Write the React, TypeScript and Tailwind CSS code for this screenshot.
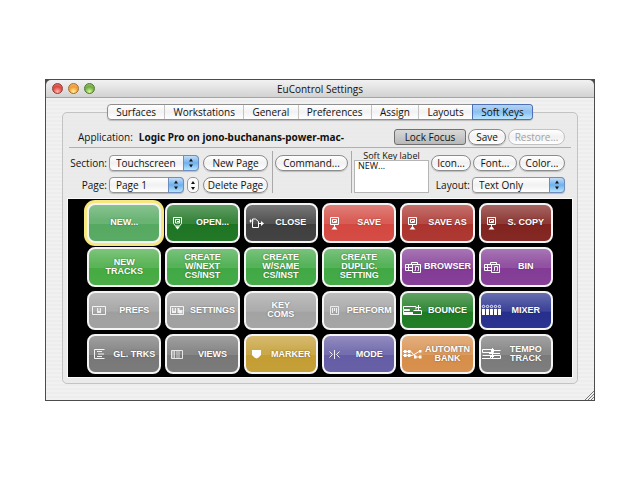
import React from 'react';
import clsx from 'clsx';

type IconName =
  | 'open' | 'close' | 'save' | 'browser' | 'prefs' | 'settings' | 'perform' | 'bounce'
  | 'mixer' | 'tracks' | 'views' | 'marker' | 'mode' | 'automation' | 'tempo';

interface SoftKey {
  label: string[];
  color: string;
  icon?: IconName;
  selected?: boolean;
}

const softKeys: SoftKey[] = [
  { label: ['NEW...'], color: 'bg-[#50a65c]', selected: true },
  { label: ['OPEN...'], color: 'bg-[#16701b]', icon: 'open' },
  { label: ['CLOSE'], color: 'bg-[#383838]', icon: 'close' },
  { label: ['SAVE'], color: 'bg-[#d2423a]', icon: 'save' },
  { label: ['SAVE AS'], color: 'bg-[#a92d27]', icon: 'save' },
  { label: ['S. COPY'], color: 'bg-[#7d1c18]', icon: 'save' },
  { label: ['NEW', 'TRACKS'], color: 'bg-[#40a83c]' },
  { label: ['CREATE', 'W/NEXT', 'CS/INST'], color: 'bg-[#3aa63e]' },
  { label: ['CREATE', 'W/SAME', 'CS/INST'], color: 'bg-[#3aa63e]' },
  { label: ['CREATE', 'DUPLIC.', 'SETTING'], color: 'bg-[#3aa63e]' },
  { label: ['BROWSER'], color: 'bg-[#7f3592]', icon: 'browser' },
  { label: ['BIN'], color: 'bg-[#7f3592]', icon: 'browser' },
  { label: ['PREFS'], color: 'bg-[#9c9c9c]', icon: 'prefs' },
  { label: ['SETTINGS'], color: 'bg-[#9c9c9c]', icon: 'settings' },
  { label: ['KEY', 'COMS'], color: 'bg-[#a0a0a0]' },
  { label: ['PERFORM'], color: 'bg-[#a0a0a0]', icon: 'perform' },
  { label: ['BOUNCE'], color: 'bg-[#16771b]', icon: 'bounce' },
  { label: ['MIXER'], color: 'bg-[#1f2889]', icon: 'mixer' },
  { label: ['GL. TRKS'], color: 'bg-[#737373]', icon: 'tracks' },
  { label: ['VIEWS'], color: 'bg-[#737373]', icon: 'views' },
  { label: ['MARKER'], color: 'bg-[#c29a2c]', icon: 'marker' },
  { label: ['MODE'], color: 'bg-[#5f57a2]', icon: 'mode' },
  { label: ['AUTOMTN', 'BANK'], color: 'bg-[#d68a44]', icon: 'automation' },
  { label: ['TEMPO', 'TRACK'], color: 'bg-[#767676]', icon: 'tempo' },
];

const tabs = ['Surfaces', 'Workstations', 'General', 'Preferences', 'Assign', 'Layouts', 'Soft Keys'];

const icons: Record<IconName, React.ReactNode> = {
  open: (
    <>
      <path d="M6.5 1.5h8v6l-2 2.500h-4l-2-2.500z" />
      <path d="M8.500 3.500h4v3.500h-4zM10 5.500h2" />
      <path d="M8 10.500h5L10.500 13.500z" fill="currentColor" stroke="none" />
    </>
  ),
  close: (
    <>
      <path d="M6.500 5.500v6h6v-6l-3-2.500h-3v2.500M3.500 5h4M4.500 3.500v3" />
      <path d="M12.500 7.500h3" />
      <path d="M15 5v5l3-2.500z" fill="currentColor" stroke="none" />
    </>
  ),
  save: (
    <>
      <path d="M6.500 1.500h8v7h-8z" />
      <path d="M8.500 3.500h4v3h-4zM10 5.500h2M10.500 8.500v2" />
      <path d="M7.500 13.500h6L10.500 10z" fill="currentColor" stroke="none" />
    </>
  ),
  browser: (
    <>
      <path d="M3.500 4.500h7v6h-7zM3.500 7.500h7M6.500 4.500v6" />
      <path d="M9.500 4.500v-2h6v2M10.500 4.500h8v8h-8z" />
      <path d="M13.500 10.500v-4h3v4M12.500 10.500h1M15.500 10.500h1" opacity=".9" />
    </>
  ),
  prefs: (
    <>
      <path d="M3.500 3.500h13v8h-13z" opacity=".85" />
      <path d="M8 5h4v5H8z" fill="currentColor" stroke="none" opacity=".8" />
      <path d="M10 5v3" stroke="#8a8a8a" />
    </>
  ),
  settings: (
    <>
      <path d="M3.500 3.500h13v8h-13z" opacity=".85" />
      <path d="M5 5h4v5H5zM10.500 5h2v5h-2zM12 7h3.500v3.500H12z" fill="currentColor" stroke="none" opacity=".85" />
      <path d="M7 5v3" stroke="#8a8a8a" />
    </>
  ),
  perform: (
    <>
      <path d="M6.500 3.500h8v8h-8z" opacity=".75" />
      <path d="M8.500 5v5M10.500 5v3M12.500 5v5" opacity=".8" />
    </>
  ),
  bounce: (
    <>
      <path d="M14 6.500V3.500H1.500v3h6v1h-6v4h18v-4h-8" />
      <path d="M2 9h9v2H2z" fill="currentColor" stroke="none" />
      <path d="M14 4.500h5M16.500 2v5" />
    </>
  ),
  mixer: (
    <>
      {[1, 5, 9, 13, 17].map((x) => (
        <g key={x}>
          <circle cx={x + 1.5} cy="3.500" r="1.200" strokeWidth=".9" />
          <path d={`M${x} 6h3v6h-3z`} fill="currentColor" stroke="none" />
        </g>
      ))}
    </>
  ),
  tracks: <path d="M15.500 2.500h-10v9h10M8 4.500h5M9 7h6M8 9.500h5" opacity=".9" />,
  views: (
    <>
      <path d="M4.500 3.500h11v8h-11z" opacity=".8" />
      <path d="M5 4h2.500v7H5zM9 4h4v7H9z" fill="currentColor" stroke="none" opacity=".35" />
      <path d="M7.500 4v7" opacity=".6" />
    </>
  ),
  marker: <path d="M6 3h9v5l-2.500 2.500-2 1-2-1L6 8z" fill="currentColor" stroke="none" />,
  mode: <path d="M10.500 3v9M5.500 4.500l3 3-3 3M15.500 4.500l-3 3 3 3" opacity=".9" />,
  automation: (
    <>
      <path d="M1 4.500h8l2.500 3 3 2.500h4M1 8.500h9l3-1.500 4-2.500" />
      <path d="M2 3h2.500v3H2zM6 3h2.500v3H6zM2 7h2.500v3H2zM6 7h2.500v3H6zM17 3h2.500v2.500H17zM12 8.500h2.500v3H12zM17 8.500h2.500v3H17z" fill="currentColor" stroke="none" />
    </>
  ),
  tempo: (
    <>
      <path d="M10 2.500H1.500v3h11v-3M13 3.500h6.500M11.500 1v5" />
      <path d="M10 8.500H1.500M1 11.500h8M12 8.500h7.500v3H9.500v-3M11.500 6v5M8 6.500h11" />
      <path d="M10 2h3v3h-3zM10 8h3v2h-3z" fill="currentColor" stroke="none" />
    </>
  ),
};

const KeyIcon = ({ name }: { name: IconName }) => (
  <svg viewBox="0 0 20 14" className="h-[14px] w-5 shrink-0" fill="none" stroke="currentColor" strokeWidth="1" aria-hidden="true">
    {icons[name]}
  </svg>
);

const Key = ({ label, color, icon, selected }: SoftKey) => (
  <button
    className={clsx(
      'flex min-w-0 items-center rounded-[8px] border-2 border-[#f4f4f4] text-[9px] leading-[9px] font-bold text-white [text-shadow:0_0_2px_rgb(0_0_0/.4)]',
      'bg-[linear-gradient(rgb(255_255_255/.32),rgb(255_255_255/.14)_45%,rgb(255_255_255/.14)_52%,rgb(255_255_255/.03)_54%,rgb(255_255_255/.06))]',
      "font-['Liberation_Sans',Arial,sans-serif]",
      color,
      selected && 'ring-3 ring-[#f7e77f]',
    )}
  >
    {icon && <KeyIcon name={icon} />}
    <span className="flex-1 text-center whitespace-nowrap">
      {label.map((line) => (
        <span key={line} className="block">{line}</span>
      ))}
    </span>
  </button>
);

const PillButton = ({ children, className, disabled }: { children: React.ReactNode; className?: string; disabled?: boolean }) => (
  <button
    disabled={disabled}
    className={clsx(
      'flex h-4 shrink-0 items-center justify-center rounded-full border border-[#8b8b8b] bg-linear-to-b from-white via-[#f1f1f1] to-white whitespace-nowrap shadow-[0_1px_1px_rgb(0_0_0/.2)]',
      'disabled:border-[#c2c2c2] disabled:text-[#a3a3a3] disabled:shadow-none',
      className,
    )}
  >
    {children}
  </button>
);

const Popup = ({ id, options, className }: { id: string; options: string[]; className?: string }) => (
  <div className={clsx('relative h-4 shrink-0', className)}>
    <select
      id={id}
      className="block h-4 w-full appearance-none rounded-[4px] border border-[#959595] bg-linear-to-b from-white via-[#f1f1f1] to-white pl-[6px] leading-[14px] shadow-[0_1px_1px_rgb(0_0_0/.2)]"
    >
      {options.map((option) => (
        <option key={option}>{option}</option>
      ))}
    </select>
    <span className="pointer-events-none absolute inset-y-0 right-0 flex w-4 items-center justify-center rounded-r-[4px] border border-[#6d8dbf] bg-linear-to-b from-[#c3def7] via-[#6fb0ec] to-[#b5e5ff]">
      <svg viewBox="0 0 6 10" className="h-[10px] w-[6px]" fill="#111" aria-hidden="true">
        <path d="M3 .5l2 3H1zM3 9.500l2-3H1z" />
      </svg>
    </span>
  </div>
);

const TitleBar = () => (
  <header className="grid h-[18px] grid-cols-[1fr_auto_1fr] items-center rounded-t-[5px] border-b border-[#a5a5a5] bg-linear-to-b from-[#f2f2f2] to-[#d2d2d2] px-[6px]">
    <div className="flex gap-[5px]">
      <button aria-label="Close" className="size-[11px] rounded-full border border-[#8c3e38] bg-[radial-gradient(circle_at_50%_85%,#ffb9a8,#e0453e_55%,#d8807b)]" />
      <button aria-label="Minimize" className="size-[11px] rounded-full border border-[#a36a2c] bg-[radial-gradient(circle_at_50%_85%,#fff39a,#f2992f_55%,#f0c08a)]" />
      <button aria-label="Zoom" className="size-[11px] rounded-full border border-[#4f7434] bg-[radial-gradient(circle_at_50%_85%,#d9fa9c,#6fac3b_55%,#a5c588)]" />
    </div>
    <h1>EuControl Settings</h1>
  </header>
);

const Toolbar = () => (
  <div className="mt-[3px] flex px-px">
    <div className="flex flex-col gap-[6px] pt-1">
      <div className="flex items-center">
        <label htmlFor="section" className="mr-[2px] w-[38px] text-right">Section:</label>
        <Popup id="section" options={['Touchscreen']} className="w-[90px]" />
        <PillButton className="ml-1 w-[65px]">New Page</PillButton>
      </div>
      <div className="flex items-center">
        <label htmlFor="page" className="mr-[2px] w-[38px] text-right">Page:</label>
        <Popup id="page" options={['Page 1']} className="w-[75px]" />
        <div className="ml-[3px] flex h-4 w-3 flex-col items-center justify-center gap-[3px] rounded-[5px] border border-[#999] bg-[#fafafa]">
          <button aria-label="Next page">
            <svg viewBox="0 0 4 3" className="h-[3px] w-1" fill="#111"><path d="M2 0l2 3H0z" /></svg>
          </button>
          <button aria-label="Previous page">
            <svg viewBox="0 0 4 3" className="h-[3px] w-1" fill="#111"><path d="M2 3l2-3H0z" /></svg>
          </button>
        </div>
        <PillButton className="ml-1 w-[65px]">Delete Page</PillButton>
      </div>
    </div>
    <div className="ml-1 w-px bg-[#a9a9a9]" />
    <PillButton className="mt-1 ml-[2px] w-[73px]">Command...</PillButton>
    <div className="ml-[3px] w-px bg-[#a9a9a9]" />
    <div className="mx-[2px] flex min-w-0 flex-1 flex-col">
      <label htmlFor="key-label" className="text-center text-[9px] leading-[9px]">Soft Key label</label>
      <textarea
        id="key-label"
        defaultValue="NEW..."
        className="block w-full flex-1 resize-none border border-[#b5b5b5] bg-white px-[3px] text-[9px] leading-[10px]"
      />
    </div>
    <div className="mr-[6px] flex flex-col gap-[6px] pt-1">
      <div className="flex gap-[2px]">
        <PillButton className="w-10">Icon...</PillButton>
        <PillButton className="w-11">Font...</PillButton>
        <PillButton className="w-[46px]">Color...</PillButton>
      </div>
      <div className="flex items-center justify-end gap-[2px]">
        <label htmlFor="layout">Layout:</label>
        <Popup id="layout" options={['Text Only']} className="w-[93px]" />
      </div>
    </div>
  </div>
);

const App = () => {
  return (
    <div className="min-h-screen bg-white px-[45px] pt-[79px] font-['Open_Sans',sans-serif] text-[10px] leading-[14px] text-[#111]">
      <div className="relative border border-[#4c4c4c] bg-[#4c4c4c]">
        <TitleBar />
        <main className="bg-[repeating-linear-gradient(#f1f1f1_0_2px,#ededed_2px_4px)] px-4 pt-[6px] pb-4">
          <div role="tablist" className="relative z-10 mx-auto -mb-2 flex h-4 w-[426px] rounded-[4px] border border-[#8f8f8f] bg-linear-to-b from-white via-[#f2f2f2] to-white shadow-[0_1px_1px_rgb(0_0_0/.2)]">
            {tabs.map((tab) => (
              <button
                key={tab}
                role="tab"
                aria-selected={tab === 'Soft Keys'}
                className="flex flex-auto items-center justify-center border-r border-[#c4c4c4] last:rounded-r-[3px] last:border-r-0 aria-selected:bg-linear-to-b aria-selected:from-[#b4d3f3] aria-selected:via-[#8ac0f0] aria-selected:to-[#b9e6ff] aria-selected:ring-1 aria-selected:ring-[#4f70b5]"
              >
                {tab}
              </button>
            ))}
          </div>
          <section className="rounded-[5px] border border-[#c3c3c3] bg-[#e8e8e8]/70 px-[5px] pt-4 pb-[6px]">
            <div className="mx-px flex items-center border-b border-[#b0b0b0] pr-[6px] pb-[2px] pl-[9px]">
              <span>Application:</span>
              <strong className="ml-[6px] min-w-0 flex-1 font-['Noto_Sans',sans-serif] whitespace-nowrap">Logic Pro on jono-buchanans-power-mac-</strong>
              <button className="h-4 w-[72px] rounded-[3px] border border-[#6f6f6f] bg-linear-to-b from-[#d9d9d9] to-[#b8b8b8] leading-[14px]">Lock Focus</button>
              <PillButton className="ml-[2px] w-[38px]">Save</PillButton>
              <PillButton className="ml-[2px] w-[57px]" disabled>Restore...</PillButton>
            </div>
            <Toolbar />
            <div className="mt-[6px] grid h-[178px] grid-cols-6 grid-rows-4 gap-1 bg-black px-[19px] pt-1 pb-[3px] ring-1 ring-white/80">
              {softKeys.map((key) => (
                <Key key={key.label.join(' ')} {...key} />
              ))}
            </div>
          </section>
        </main>
        <svg viewBox="0 0 10 10" className="absolute right-0 bottom-0 size-[10px]" stroke="#777" aria-hidden="true">
          <path d="M1 10l9-9M4 10l6-6M7 10l3-3" />
        </svg>
      </div>
    </div>
  );
};

export default App;
